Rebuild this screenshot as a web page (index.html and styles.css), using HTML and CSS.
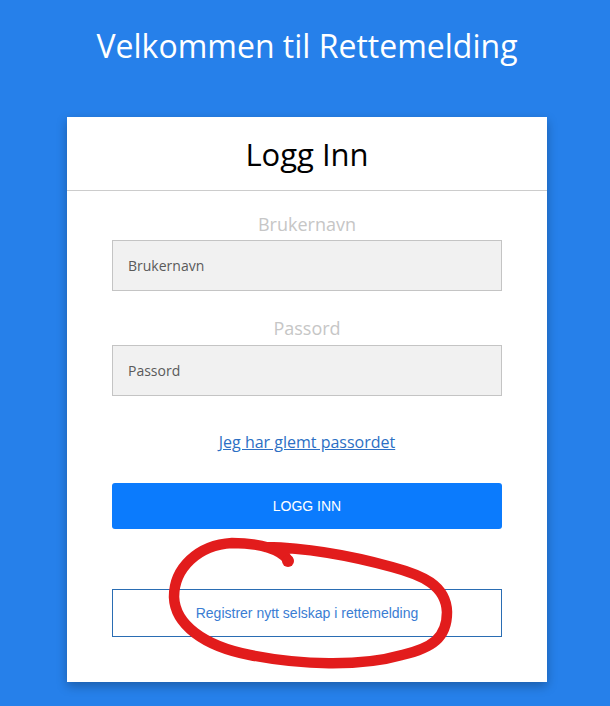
FILE: index.html
```html
<!DOCTYPE html>
<html lang="no">
<head>
<meta charset="utf-8">
<title>Rettemelding – Logg Inn</title>
<link rel="stylesheet" href="styles.css">
</head>
<body>
<div class="page">
  <h1 class="welcome">Velkommen til Rettemelding</h1>
  <div class="card">
    <div class="card-header">Logg Inn</div>
    <form class="card-body">
      <label class="field-label" for="user">Brukernavn</label>
      <input class="field-input" id="user" type="text" placeholder="Brukernavn">
      <label class="field-label second" for="pass">Passord</label>
      <input class="field-input" id="pass" type="password" placeholder="Passord">
      <a class="forgot" href="#">Jeg har glemt passordet</a>
      <button class="btn-primary" type="button">LOGG INN</button>
      <button class="btn-outline" type="button">Registrer nytt selskap i rettemelding</button>
    </form>
  </div>
</div>
<svg class="annotation" width="610" height="706" viewBox="0 0 610 706" aria-hidden="true">
  <path d="M288,560 C281,550 262,543 232,543 C198,545 174,568 174,597 C175,624 203,646 250,655 C300,665 360,667 402,655 C432,648 447,638 447,612 C446,585 422,575 392,567 C352,556 312,548 266,547" fill="none" stroke="#e21c1c" stroke-width="10.5" stroke-linecap="round" stroke-linejoin="round"/>
  <circle cx="288" cy="561" r="6" fill="#e21c1c"/>
</svg>
</body>
</html>
```

FILE: styles.css
```css
html, body {
  margin: 0;
  padding: 0;
}

body {
  background: #2680ea;
  font-family: "Open Sans", "Noto Sans", sans-serif;
  min-height: 706px;
  position: relative;
}

.page {
  padding-left: 4px;
  padding-bottom: 24px;
}

.welcome {
  margin: 24px 0 0;
  font-size: 32px;
  line-height: 44px;
  font-weight: 400;
  color: #ffffff;
  text-align: center;
}

.card {
  width: 480px;
  margin: 49px auto 0;
  background: #ffffff;
  box-shadow: 0 4px 10px rgba(0, 0, 0, 0.28);
}

.card-header {
  padding: 16px 0 15px;
  font-size: 31px;
  line-height: 42px;
  color: #000000;
  text-align: center;
  border-bottom: 1px solid #cccccc;
}

.card-body {
  display: flex;
  flex-direction: column;
  padding: 21px 45px 45px;
  margin: 0;
}

.field-label {
  font-size: 18px;
  line-height: 24px;
  color: #c6c6c6;
  text-align: center;
  margin-bottom: 4px;
}

.field-label.second {
  margin-top: 25px;
  margin-bottom: 5px;
}

.field-input {
  box-sizing: border-box;
  height: 51px;
  margin: 0;
  padding: 0 15px;
  background: #f1f1f1;
  border: 1px solid #c4c4c4;
  border-radius: 0;
  font-family: "Open Sans", "Noto Sans", sans-serif;
  font-size: 14px;
  color: #333333;
  outline: none;
}

.field-input::placeholder {
  color: #5a5a5a;
  opacity: 1;
}

.forgot {
  align-self: center;
  margin-top: 35px;
  font-size: 16px;
  line-height: 22px;
  color: #2c6fc4;
  text-decoration: underline;
}

.btn-primary {
  margin-top: 30px;
  height: 46px;
  border: 0;
  border-radius: 3px;
  background: #0b7bfd;
  color: #ffffff;
  font-family: "Liberation Sans", Arial, sans-serif;
  font-size: 14px;
  cursor: pointer;
}

.btn-outline {
  margin-top: 60px;
  height: 48px;
  border: 1px solid #2a6db3;
  border-radius: 0;
  background: #ffffff;
  color: #3a7dd3;
  font-family: "Liberation Sans", Arial, sans-serif;
  font-size: 14px;
  cursor: pointer;
}

.annotation {
  position: absolute;
  top: 0;
  left: 0;
  pointer-events: none;
}
```
